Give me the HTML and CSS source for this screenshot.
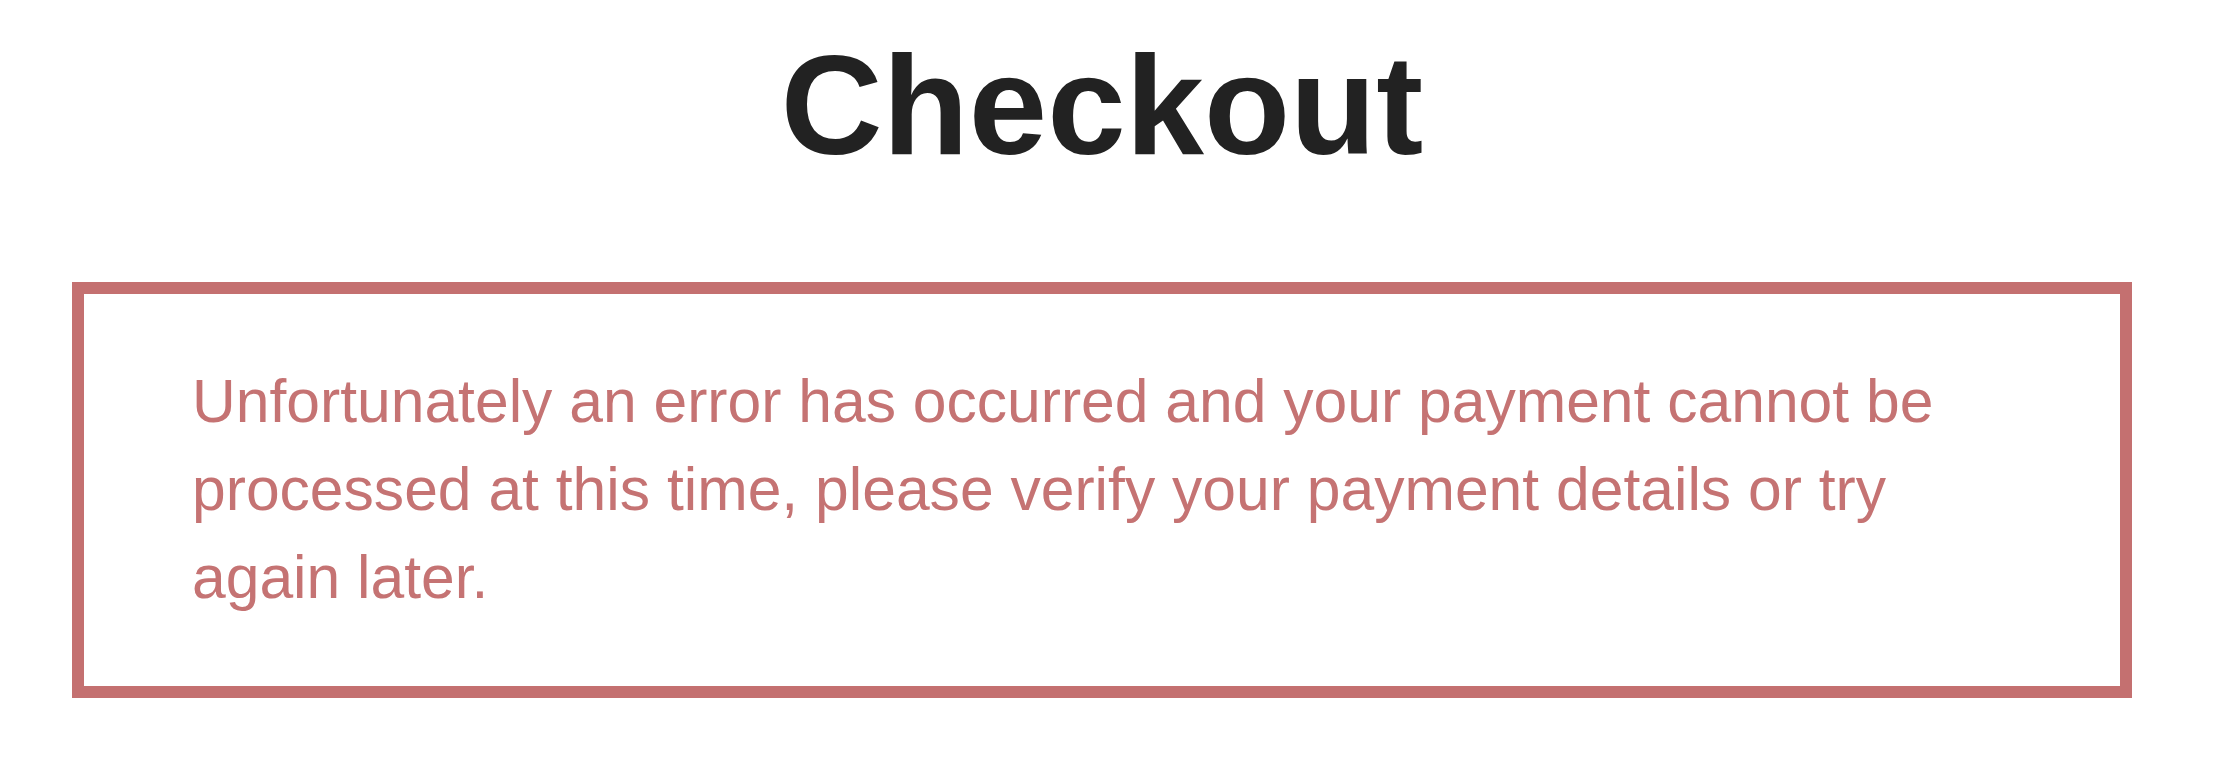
FILE: index.html
```html
<!DOCTYPE html>
<html lang="en">
<head>
    <meta charset="UTF-8">
    <meta name="viewport" content="width=device-width, initial-scale=1.0">
    <title>Checkout</title>
    <link rel="stylesheet" href="styles.css">
</head>
<body>
    <div class="container">
        <h1>Checkout</h1>
        <div class="error-box">
            <p>Unfortunately an error has occurred and your payment cannot be processed at this time, please verify your payment details or try again later.</p>
        </div>
    </div>
</body>
</html>
```

FILE: styles.css
```css
body {
    margin: 0;
    font-family: "Liberation Sans", Arial, sans-serif;
    background: #ffffff;
}

.container {
    padding: 24px 90px 0 72px;
}

h1 {
    margin: 0 0 96px;
    font-size: 141px;
    line-height: 1.15;
    font-weight: bold;
    text-align: center;
    color: #222222;
}

.error-box {
    border: 12px solid #c47070;
    padding: 63px 108px 65px;
}

.error-box p {
    margin: 0;
    font-size: 60.6px;
    line-height: 88px;
    color: #c57373;
}
```
